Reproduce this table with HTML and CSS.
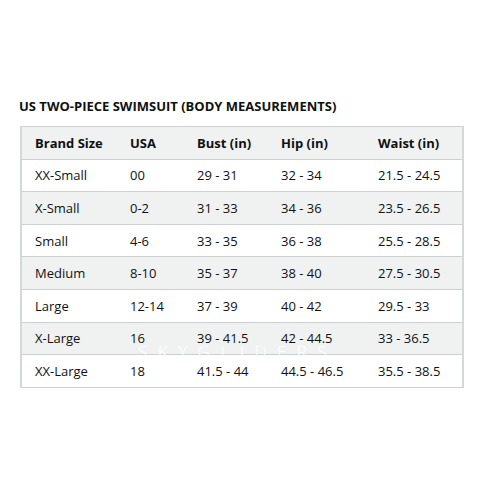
FILE: index.html
```html
<!DOCTYPE html>
<html lang="en">

<head>
    <meta charset="UTF-8">
    <meta name="viewport" content="width=device-width, initial-scale=1.0">
    <title>US Two-Piece Swimsuit Size Chart</title>
    <link rel="stylesheet" href="styles.css">
</head>

<body>

    <div class="chart">
        <h2 class="chart-title">US TWO-PIECE SWIMSUIT (BODY MEASUREMENTS)</h2>

        <!-- Size Table -->
        <div class="table-wrap">
            <table class="size-table">
                <colgroup>
                    <col class="col-brand">
                    <col class="col-usa">
                    <col class="col-bust">
                    <col class="col-hip">
                    <col class="col-waist">
                </colgroup>
                <thead>
                    <tr>
                        <th>Brand Size</th>
                        <th>USA</th>
                        <th>Bust (in)</th>
                        <th>Hip (in)</th>
                        <th>Waist (in)</th>
                    </tr>
                </thead>
                <tbody>
                    <tr>
                        <td>XX-Small</td>
                        <td>00</td>
                        <td>29 - 31</td>
                        <td>32 - 34</td>
                        <td>21.5 - 24.5</td>
                    </tr>
                    <tr>
                        <td>X-Small</td>
                        <td>0-2</td>
                        <td>31 - 33</td>
                        <td>34 - 36</td>
                        <td>23.5 - 26.5</td>
                    </tr>
                    <tr>
                        <td>Small</td>
                        <td>4-6</td>
                        <td>33 - 35</td>
                        <td>36 - 38</td>
                        <td>25.5 - 28.5</td>
                    </tr>
                    <tr>
                        <td>Medium</td>
                        <td>8-10</td>
                        <td>35 - 37</td>
                        <td>38 - 40</td>
                        <td>27.5 - 30.5</td>
                    </tr>
                    <tr>
                        <td>Large</td>
                        <td>12-14</td>
                        <td>37 - 39</td>
                        <td>40 - 42</td>
                        <td>29.5 - 33</td>
                    </tr>
                    <tr>
                        <td>X-Large</td>
                        <td>16</td>
                        <td>39 - 41.5</td>
                        <td>42 - 44.5</td>
                        <td>33 - 36.5</td>
                    </tr>
                    <tr>
                        <td>XX-Large</td>
                        <td>18</td>
                        <td>41.5 - 44</td>
                        <td>44.5 - 46.5</td>
                        <td>35.5 - 38.5</td>
                    </tr>
                </tbody>
            </table>

            <!-- Watermark over the table -->
            <div class="watermark">SKYGLIDERS</div>
        </div>
    </div>

</body>

</html>
```

FILE: styles.css
```css
/* General Reset */
* {
    margin: 0;
    padding: 0;
    box-sizing: border-box;
}

body {
    font-family: "Open Sans", Arial, sans-serif;
    background-color: #fff;
    color: #0f1111;
}

.chart {
    padding: 98px 0 0 19px;
}

.chart-title {
    font-size: 13px;
    font-weight: bold;
    line-height: 16px;
    margin-bottom: 12px;
}

/* Table Styling */
.table-wrap {
    position: relative;
    width: 442px;
    margin-left: 1px;
}

.size-table {
    width: 442px;
    border-collapse: collapse;
    table-layout: fixed;
    font-size: 13px;
}

.col-brand { width: 96px; }
.col-usa { width: 67px; }
.col-bust { width: 84px; }
.col-hip { width: 97px; }
.col-waist { width: 98px; }

.size-table th,
.size-table td {
    height: 32.6px;
    padding: 0 0 0 13px;
    text-align: left;
    vertical-align: middle;
    border-top: 1px solid #cdd0d0;
    border-bottom: 1px solid #cdd0d0;
    white-space: nowrap;
}

.size-table th:first-child,
.size-table td:first-child {
    border-left: 2px solid #d5d8d8;
}

.size-table th:last-child,
.size-table td:last-child {
    border-right: 2px solid #d5d8d8;
}

.size-table th {
    font-weight: bold;
    background-color: #f0f2f2;
}

.size-table tbody tr:nth-child(even) td {
    background-color: #f0f2f2;
}

.watermark {
    position: absolute;
    left: 118px;
    top: 214px;
    font-family: "Open Sans", Arial, sans-serif;
    font-size: 17px;
    font-weight: 300;
    letter-spacing: 10.5px;
    color: #fff;
}
```
